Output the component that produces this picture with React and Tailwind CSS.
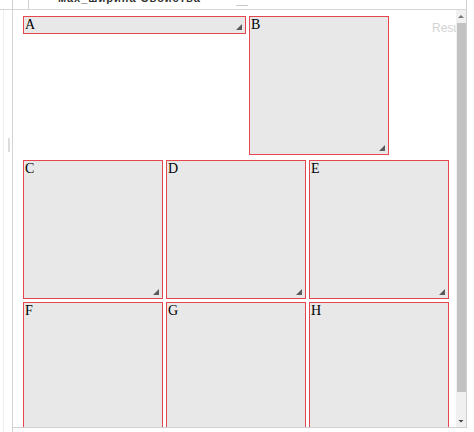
const serif = { fontFamily: '"Liberation Serif", "Times New Roman", serif' };

function Box({ label, w = 'w-[140px]', h = 'h-[139px]', grip = true }) {
  return (
    <div className={`relative shrink-0 ${w} ${h} bg-[#e8e8e8] border border-[#e4474d] text-[14px] leading-[15px] text-black px-[1px]`} style={serif}>
      {label}
      {grip && (
        <span className="absolute right-[3px] bottom-[3px] w-[6px] h-[6px] bg-[#5a5a5a] [clip-path:polygon(100%_0,100%_100%,0_100%)]" />
      )}
    </div>
  );
}

export default function App() {
  return (
    <div className="w-[474px] h-[432px] bg-white overflow-hidden" style={{ fontFamily: '"Liberation Sans", Arial, sans-serif' }}>
      {/* top strip, cut off */}
      <div className="relative h-[10px] border-b border-[#d6d6d6] overflow-hidden w-[467px]">
        <div className="absolute left-[12px] top-0 h-[9px] w-[17px] border-x border-[#d0d0d0]" />
        <div className="absolute left-[58px] -top-[8px] text-[11px] leading-[13px] text-[#333] tracking-[1px] font-bold">
          мах_ширина  Свойства
        </div>
        <div className="absolute left-[236px] top-[5px] w-[12px] h-[1px] bg-[#c8c8c8]" />
        <div className="absolute right-0 top-0 h-[9px] w-px bg-[#d0d0d0]" />
      </div>

      <div className="flex h-[422px]">
        {/* left side bar */}
        <div className="relative w-[13px] h-full border-r border-[#d4d4d4]">
          <div className="absolute left-[3px] top-0 h-full w-px bg-[#eeeeee]" />
          <div className="absolute left-[8px] top-[128px] h-[14px] w-[2px] bg-[#dcdcdc]" />
        </div>

        {/* result frame */}
        <div className="flex h-[418px] w-[454px] border-b border-r border-[#d0d0d0]">
          <div className="relative flex-1 overflow-hidden pl-[10px] pt-[6px]">
            <div className="absolute top-[9px] left-[419px] text-[12px] text-[#d2d2d2]">Result</div>

            <div className="flex items-start gap-[3px]">
              <Box label="A" w="w-[223px]" h="h-[18px]" />
              <Box label="B" />
            </div>
            <div className="flex gap-[3px] mt-[5px]">
              <Box label="C" />
              <Box label="D" />
              <Box label="E" />
            </div>
            <div className="flex gap-[3px] mt-[3px]">
              <Box label="F" grip={false} />
              <Box label="G" grip={false} />
              <Box label="H" grip={false} />
            </div>
          </div>

          {/* scrollbar */}
          <div className="relative w-[10px] h-full bg-[#f0f0f0] flex flex-col items-center">
            <div className="h-[13px] flex items-center justify-center">
              <span className="w-[6px] h-[3px] bg-[#777] [clip-path:polygon(50%_0,100%_100%,0_100%)]" />
            </div>
            <div className="w-[9px] h-[369px] bg-[#c2c2c2]" />
            <div className="flex-1" />
            <div className="h-[12px] flex items-center justify-center">
              <span className="w-[6px] h-[3px] bg-[#444] [clip-path:polygon(0_0,100%_0,50%_100%)]" />
            </div>
          </div>
        </div>
      </div>
    </div>
  );
}
